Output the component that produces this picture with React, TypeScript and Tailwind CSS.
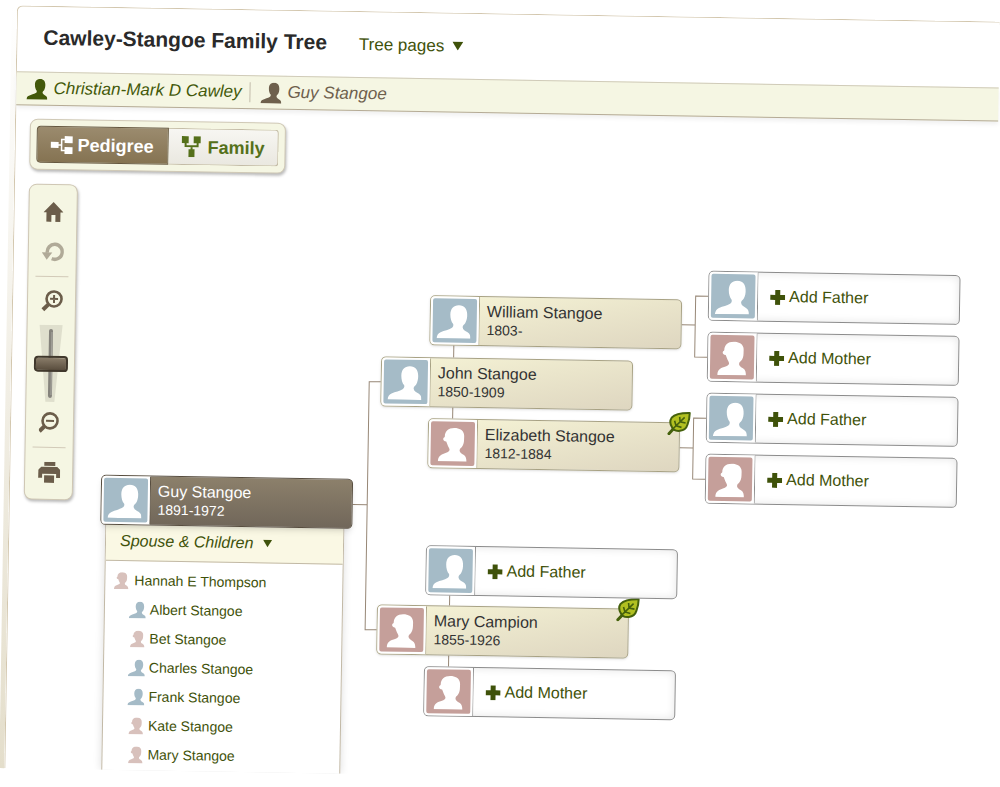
import type { ReactNode } from "react";
import clsx from "clsx";

type Sex = "male" | "female";

type TreeNode = {
  x: number;
  y: number;
  sex: Sex;
  name?: string;
  years?: string;
  hint?: boolean;
  root?: boolean;
};

// canvas coordinates, every card is 252 x 50
const NODES: TreeNode[] = [
  { x: 91, y: 368, sex: "male", name: "Guy Stangoe", years: "1891-1972", root: true },
  { x: 369, y: 245, sex: "male", name: "John Stangoe", years: "1850-1909" },
  { x: 369, y: 493, sex: "female", name: "Mary Campion", years: "1855-1926", hint: true },
  { x: 417, y: 183, sex: "male", name: "William Stangoe", years: "1803-" },
  { x: 417, y: 306, sex: "female", name: "Elizabeth Stangoe", years: "1812-1884", hint: true },
  { x: 417, y: 433, sex: "male" },
  { x: 417, y: 554, sex: "female" },
  { x: 695, y: 154, sex: "male" },
  { x: 695, y: 215, sex: "female" },
  { x: 695, y: 276, sex: "male" },
  { x: 695, y: 337, sex: "female" },
];

const CHILDREN: { name: string; sex: Sex }[] = [
  { name: "Albert Stangoe", sex: "male" },
  { name: "Bet Stangoe", sex: "female" },
  { name: "Charles Stangoe", sex: "male" },
  { name: "Frank Stangoe", sex: "male" },
  { name: "Kate Stangoe", sex: "female" },
  { name: "Mary Stangoe", sex: "female" },
];

const MALE =
  "M4 40 C4.500 37 5.500 35 8 34 C12 32 16 31.500 19 29.500 C20.500 28.500 21 27 20.500 25.500 C18.500 23.500 17.500 19.500 17.500 16 C17.500 10 20.500 6.500 26 6.500 C31.500 6.500 34 10 34.300 15 C34.600 18 34 22 32.500 24.500 C31.500 26 30 26.500 30 28.500 C30.300 31 32.500 32 35 33.500 C37.500 35 38 37 38 40 Z";
const FEMALE =
  "M7.500 40 C7.500 36 9 34 12.500 32.500 C16 31.200 18.500 30.500 19 28.500 C19 26.500 17.500 25.500 16.500 22.500 L15.500 20 C13.500 20 12 18.500 12.500 17 C12.800 16 14 15.800 14 15 C14 10 17.500 6.500 23.500 6.500 C28.500 6.500 32 8.500 33 12 C33.600 14 33.300 16 33.300 18 C33.300 21 32.500 24 31 25.500 C30 26.500 29 27 29 29 C29.300 31 31 31.800 33 33 C35.500 34.500 36 37 36 40 Z";

function Person({ sex, className }: { sex: Sex; className: string }) {
  return (
    <svg viewBox="4 6 34 34" className={className} fill="currentColor" aria-hidden="true">
      <path d={sex === "male" ? MALE : FEMALE} />
    </svg>
  );
}

function Caret({ className }: { className: string }) {
  return (
    <svg viewBox="0 0 11 9" className={className} fill="currentColor" aria-hidden="true">
      <path d="M0 0H11L5.500 9Z" />
    </svg>
  );
}

function Leaf() {
  return (
    <svg viewBox="0 0 24 24" className="absolute -top-3 left-[238px] size-6" aria-hidden="true">
      <path d="M6 18 L2 22.500" stroke="#45610c" strokeWidth="3" strokeLinecap="round" />
      <path
        d="M22.500 1.500 C16 1.500 8 2.500 4.500 6.500 C2.500 9.500 3 13 5 16 C6 18.500 9 20 13 19.500 C17 19 19.500 16.500 20.500 13 C22 9 22.500 5.500 22.500 1.500 Z"
        fill="#b1c021"
        stroke="#45610c"
        strokeWidth="2"
        strokeLinejoin="round"
      />
      <path
        d="M5.500 18 L17.500 6 M12.500 5.500 L13 10.500 L18.500 11.500 M7.500 9.500 L9 14.500 L14.500 16"
        fill="none"
        stroke="#45610c"
        strokeWidth="1.600"
      />
    </svg>
  );
}

function Card({ node }: { node: TreeNode }) {
  const { x, y, sex, name, years, hint, root } = node;
  return (
    <div
      style={{ left: x, top: y }}
      className={clsx(
        "absolute flex h-[50px] w-[252px] rounded-[5px] border",
        root && "border-[#574d3f] bg-gradient-to-b from-[#8c806b] to-[#71675a] text-white shadow-md",
        !root && name && "border-[#a8a284] bg-gradient-to-br from-[#f6f4d6] to-[#ded6c0] text-[#333] shadow-sm",
        !name && "border-[#8c8c8c] bg-white text-[#3f520a] shadow-[inset_0_0_8px_#e4e4e4]"
      )}
    >
      <div
        className={clsx(
          "w-[49px] shrink-0 rounded-l-[4px] border-r bg-white p-[2px]",
          root ? "border-[#574d3f]" : name ? "border-[#a8a284]" : "border-[#8c8c8c]"
        )}
      >
        <div
          className={clsx(
            "size-11 rounded-xs pt-[6px] pl-1 text-white",
            sex === "male" ? "bg-[#a5bbc7]" : "bg-[#c59f9a]"
          )}
        >
          <Person sex={sex} className="size-[34px]" />
        </div>
      </div>
      {name ? (
        <a href="#person" className="flex-1 pt-[6px] pl-[7px] whitespace-nowrap">
          <span className="block text-base leading-[18px]">{name}</span>
          <span className="block text-sm leading-[18px]">{years}</span>
        </a>
      ) : (
        <button type="button" className="flex flex-1 items-center gap-1 pl-3 text-base whitespace-nowrap">
          <svg viewBox="0 0 15 15" className="size-[15px]" fill="currentColor" aria-hidden="true">
            <path d="M5 0H10V5H15V10H10V15H5V10H0V5H5Z" />
          </svg>
          {sex === "male" ? "Add Father" : "Add Mother"}
        </button>
      )}
      {hint && <Leaf />}
    </div>
  );
}

function Connectors() {
  return (
    <svg className="absolute inset-0 size-full" fill="none" stroke="#978776" strokeWidth="1" aria-hidden="true">
      <path d="M343 393.500H357.500 M369 270.500H357.500V518.500H369" />
      <path d="M669 208.500H682.500 M695 179.500H682.500V240.500H695" />
      <path d="M669 331.500H682.500 M695 301.500H682.500V362.500H695" />
      <path d="M441.500 233V245 M441.500 295V306 M441.500 483V493 M441.500 543V554" />
    </svg>
  );
}

function Family() {
  return (
    <div className="absolute top-[418px] bottom-0 left-[96px] w-[239px] border-x border-[#c2b9a6] bg-white text-[#3f520a] shadow-[0_0_8px_#dcdcdc]">
      <button
        type="button"
        className="flex h-9 w-full items-center gap-[10px] border-b border-[#c2b9a6] bg-[#faf8e4] pb-1 pl-[14px] text-base italic"
      >
        Spouse &amp; Children
        <Caret className="h-[8px] w-[9px]" />
      </button>
      <ul className="pt-1 text-sm leading-[29px]">
        <li>
          <a href="#spouse" className="flex h-[30px] items-center gap-[5px] pl-[7px]">
            <Person sex="female" className="size-[17px] text-[#d8c1bc]" />
            Hannah E Thompson
          </a>
        </li>
        {CHILDREN.map((c) => (
          <li key={c.name}>
            <a href="#child" className="flex h-[29px] items-center gap-1 pl-6">
              <Person
                sex={c.sex}
                className={clsx("size-[17px]", c.sex === "male" ? "text-[#a5bbc7]" : "text-[#d8c1bc]")}
              />
              {c.name}
            </a>
          </li>
        ))}
      </ul>
    </div>
  );
}

function ToolButton({ label, children }: { label: string; children: ReactNode }) {
  return (
    <button type="button" aria-label={label} className="flex h-10 w-full items-center justify-center">
      {children}
    </button>
  );
}

function Toolbar() {
  return (
    <div className="flex w-[49px] flex-col items-center rounded-lg border border-[#cfc7b4] bg-[#f5f6e3] px-[7px] py-[7px] text-[#6b5d4a] shadow-[1px_2px_3px_#bbb]">
      <ToolButton label="Home">
        <svg viewBox="0 0 20 20" className="size-5" fill="currentColor">
          <path d="M10 0L20 10.500H17V20H12V13H8V20H3V10.500H0Z" />
        </svg>
      </ToolButton>
      <ToolButton label="Reset">
        <svg viewBox="0 0 22 20" className="h-5 w-[22px] text-[#b0aa98]">
          <path d="M5.500 11A7.500 7.500 0 1 1 10 16.800" fill="none" stroke="currentColor" strokeWidth="3.500" />
          <path d="M0 10.500H10.500L5 18Z" fill="currentColor" />
        </svg>
      </ToolButton>
      <hr className="my-1 w-full border-[#d2cab8]" />
      <ToolButton label="Zoom in">
        <svg viewBox="0 0 22 22" className="size-[22px]" fill="none" stroke="currentColor">
          <circle cx="13" cy="9" r="7.500" strokeWidth="2.600" />
          <path d="M13 5V13M9 9H17" strokeWidth="2" />
          <path d="M7.500 14.500L2 20" strokeWidth="4" />
        </svg>
      </ToolButton>
      <div className="relative mt-1 h-[78px] w-[34px]">
        <svg viewBox="0 0 34 78" className="absolute inset-0 size-full" aria-hidden="true">
          <path d="M5 0H28L21 77H12Z" fill="#dfdfcd" />
          <path d="M16.500 6V71" stroke="#85837c" strokeWidth="4" strokeLinecap="round" />
          <path d="M17.500 7V70" stroke="#aaa9a1" strokeWidth="1" />
        </svg>
        <input
          type="range"
          aria-label="Zoom level"
          defaultValue={50}
          className="absolute inset-0 size-full appearance-none bg-transparent [writing-mode:vertical-lr] [&::-webkit-slider-thumb]:h-4 [&::-webkit-slider-thumb]:w-[34px] [&::-webkit-slider-thumb]:appearance-none [&::-webkit-slider-thumb]:rounded [&::-webkit-slider-thumb]:border-2 [&::-webkit-slider-thumb]:border-[#40382c] [&::-webkit-slider-thumb]:bg-gradient-to-b [&::-webkit-slider-thumb]:from-[#8a7d6a] [&::-webkit-slider-thumb]:to-[#5a4e3e]"
        />
      </div>
      <ToolButton label="Zoom out">
        <svg viewBox="2 0 22 22" className="size-[22px]" fill="none" stroke="currentColor">
          <circle cx="13" cy="9" r="7.500" strokeWidth="2.600" />
          <path d="M9 9H17" strokeWidth="2" />
          <path d="M7.500 14.500L2.500 19.500" strokeWidth="4" />
        </svg>
      </ToolButton>
      <hr className="my-1 w-full border-[#d2cab8]" />
      <ToolButton label="Print">
        <svg viewBox="0 0 22 21" className="h-[21px] w-[22px]" fill="currentColor">
          <path d="M6 0H17V4H6Z M3 5H19L22 8V16H18V12H4V16H0V8Z M6 13.500H16V21H6Z" />
        </svg>
      </ToolButton>
    </div>
  );
}

function ViewSwitch() {
  return (
    <div className="flex w-[256px] rounded-lg border border-[#d0c9b6] bg-[#f5f6e3] p-[6px] font-bold shadow-[1px_2px_3px_#bbb]">
      <button
        type="button"
        className="flex h-[37px] w-[132px] items-center gap-1 rounded-l border border-[#65573f] bg-gradient-to-b from-[#9b8b6e] to-[#857352] pl-[13px] text-lg text-white"
      >
        <svg viewBox="0 0 23 18" className="h-[18px] w-[23px]" aria-hidden="true">
          <path d="M7 9H11 M15 3.500H11V14.500H15" fill="none" stroke="currentColor" strokeWidth="1.500" />
          <path d="M0 6H8V12H0Z M14 0H22V7H14Z M14 11H22V18H14Z" fill="currentColor" />
        </svg>
        Pedigree
      </button>
      <button
        type="button"
        className="flex h-[37px] flex-1 items-center gap-[6px] rounded-r border border-l-0 border-[#c3bba6] bg-gradient-to-b from-[#f7f6f2] to-[#eae8e0] pl-[13px] text-lg text-[#55701a]"
      >
        <svg viewBox="0 0 20 21" className="h-[21px] w-5" aria-hidden="true">
          <path d="M4 5V10H16V5 M10 10V15" fill="none" stroke="currentColor" strokeWidth="2" />
          <path d="M0 0H7V7H0Z M12 0H19V7H12Z M7 13H13V21H7Z" fill="currentColor" />
        </svg>
        Family
      </button>
    </div>
  );
}

export default function App() {
  return (
    <div className="min-h-screen overflow-hidden bg-white font-['Liberation_Sans',Arial,sans-serif]">
      <div className="flex origin-top-left rotate-[0.95deg] pt-[5px] pl-3">
        <div className="w-[5px] shrink-0 bg-gradient-to-b from-white to-[#e4decb]" />
        <div className="min-w-0 flex-1 rounded-tl-md border-t border-l border-[#d3c7ae]">
          <header className="flex h-[65px] items-center pl-[26px] whitespace-nowrap">
            <h1 className="pb-1 text-[21px] font-bold text-[#2a2a2a]">Cawley-Stangoe Family Tree</h1>
            <button type="button" className="ml-8 flex items-center gap-2 text-[17px] text-[#3f520a]">
              Tree pages
              <Caret className="h-[9px] w-[11px]" />
            </button>
          </header>
          <nav
            aria-label="Recent people"
            className="flex h-[34px] items-center border-t border-b border-t-[#d0cbb9] border-b-[#b5ab96] bg-[#f5f6e3] pl-[10px] text-[17px] whitespace-nowrap italic shadow-[0_3px_4px_#f0f0f0]"
          >
            <a href="#home-person" className="flex items-center gap-[6px] text-[#43590a]">
              <Person sex="male" className="size-[21px]" />
              Christian-Mark D Cawley
            </a>
            <span className="mr-[10px] ml-2 h-5 w-px bg-[#c3bcab]" />
            <a href="#guy" className="flex items-center gap-[6px] text-[#6e604d]">
              <Person sex="male" className="size-[21px]" />
              Guy Stangoe
            </a>
          </nav>
          <main className="relative flex min-h-[663px] flex-col items-start gap-[14px] overflow-hidden pt-[13px] pl-[14px]">
            <div className="absolute inset-0">
              <Connectors />
              <Family />
              {NODES.map((n) => (
                <Card key={`${n.x}-${n.y}`} node={n} />
              ))}
            </div>
            <div className="relative">
              <ViewSwitch />
            </div>
            <div className="relative">
              <Toolbar />
            </div>
          </main>
        </div>
      </div>
    </div>
  );
}
